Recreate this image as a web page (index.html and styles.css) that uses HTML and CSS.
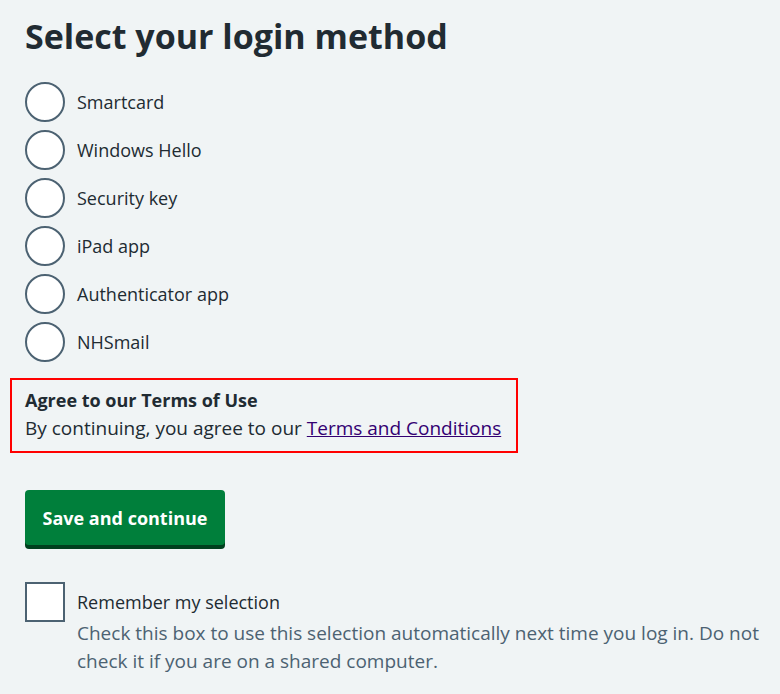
FILE: index.html
```html
<!DOCTYPE html>
<html lang="en">
<head>
<meta charset="utf-8">
<title>Select your login method</title>
<link rel="stylesheet" href="styles.css">
</head>
<body>
<main class="page">
  <h1 class="title">Select your login method</h1>
  <div class="radios">
    <label class="radio"><span class="radio-circle"></span><span class="radio-label">Smartcard</span></label>
    <label class="radio"><span class="radio-circle"></span><span class="radio-label">Windows Hello</span></label>
    <label class="radio"><span class="radio-circle"></span><span class="radio-label">Security key</span></label>
    <label class="radio"><span class="radio-circle"></span><span class="radio-label">iPad app</span></label>
    <label class="radio"><span class="radio-circle"></span><span class="radio-label">Authenticator app</span></label>
    <label class="radio"><span class="radio-circle"></span><span class="radio-label">NHSmail</span></label>
  </div>
  <div class="terms">
    <p class="terms-title">Agree to our Terms of Use</p>
    <p class="terms-text">By continuing, you agree to our <a class="terms-link" href="#">Terms and Conditions</a></p>
  </div>
  <button class="button" type="button">Save and continue</button>
  <div class="checkbox">
    <span class="checkbox-box"></span>
    <div class="checkbox-text">
      <p class="checkbox-label">Remember my selection</p>
      <p class="checkbox-hint">Check this box to use this selection automatically next time you log in. Do not check it if you are on a shared computer.</p>
    </div>
  </div>
</main>
</body>
</html>
```
FILE: styles.css
```css
html, body {
  margin: 0;
  padding: 0;
  background: #f0f4f5;
}
body {
  font-family: "Open Sans", "Noto Sans", sans-serif;
  color: #212b32;
  font-size: 19px;
}
.page {
  padding: 0 14px 0 25px;
}
.title {
  margin: 16px 0 26px;
  font-size: 34px;
  line-height: 40px;
  font-weight: 700;
}
.radios {
  display: flex;
  flex-direction: column;
  gap: 8px;
}
.radio {
  display: flex;
  align-items: center;
  gap: 12px;
}
.radio-circle {
  width: 40px;
  height: 40px;
  box-sizing: border-box;
  border: 2px solid #4c6272;
  border-radius: 50%;
  background: #ffffff;
  flex: none;
}
.radio-label {
  font-size: 18px;
  line-height: 28px;
}
.terms {
  margin: 16px 0 0 -15px;
  width: 508px;
  box-sizing: border-box;
  border: 2px solid #ff0000;
  padding: 6px 13px 9px 13px;
}
.terms .terms-title,
.terms .terms-text {
  margin: 0;
  line-height: 28px;
}
.terms .terms-title {
  font-size: 18px;
  font-weight: 700;
}
.terms-link {
  color: #330072;
  text-decoration: underline;
}
.button {
  display: block;
  margin-top: 37px;
  width: 200px;
  height: 55px;
  padding: 0;
  border: 0;
  border-radius: 4px;
  background: #007f3b;
  box-shadow: 0 4px 0 #00401e;
  color: #ffffff;
  font-family: inherit;
  font-size: 18px;
  font-weight: 700;
  line-height: 28px;
}
.checkbox {
  margin-top: 37px;
  display: flex;
  gap: 12px;
  align-items: flex-start;
}
.checkbox-box {
  width: 40px;
  height: 40px;
  box-sizing: border-box;
  border: 2px solid #4c6272;
  background: #ffffff;
  flex: none;
}
.checkbox-text .checkbox-label {
  margin: 8px 0 0;
  font-size: 18px;
  line-height: 24px;
}
.checkbox-text .checkbox-hint {
  margin: 5px 0 0;
  color: #4c6272;
  line-height: 28px;
}
```
